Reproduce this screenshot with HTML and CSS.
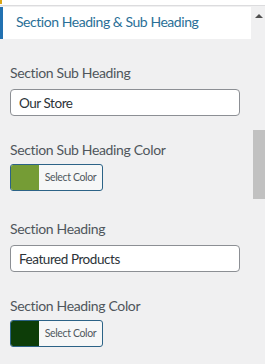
FILE: index.html
```html
<!DOCTYPE html>
<html lang="en">

<head>
    <meta charset="UTF-8">
    <meta name="viewport" content="width=device-width, initial-scale=1.0">
    <title>Customizer - Section Heading</title>
    <link rel="stylesheet" href="styles.css">
</head>

<body>
    <div class="topbar"><span class="topbar-accent"></span></div>
    <div class="frame">
        <div class="panel">
            <div class="section-head">Section Heading &amp; Sub Heading</div>
            <div class="controls">
                <div class="control">
                    <label class="control-label">Section Sub Heading</label>
                    <input type="text" class="text-input" value="Our Store">
                </div>
                <div class="control color-control">
                    <label class="control-label">Section Sub Heading Color</label>
                    <button class="color-button">
                        <span class="swatch" style="background: #759c35;"></span>
                        <span class="color-text">Select Color</span>
                    </button>
                </div>
                <div class="control">
                    <label class="control-label">Section Heading</label>
                    <input type="text" class="text-input" value="Featured Products">
                </div>
                <div class="control color-control">
                    <label class="control-label">Section Heading Color</label>
                    <button class="color-button">
                        <span class="swatch" style="background: #0d3d08;"></span>
                        <span class="color-text">Select Color</span>
                    </button>
                </div>
            </div>
        </div>
        <div class="scrollbar">
            <span class="arrow-up"></span>
            <span class="thumb"></span>
        </div>
    </div>
</body>

</html>
```

FILE: styles.css
```css
body {
    font-family: Lato, "Open Sans", sans-serif;
    background-color: #f0f0f1;
    margin: 0;
    padding: 0;
    width: 265px;
    height: 364px;
    overflow: hidden;
}

.topbar {
    height: 5px;
    background: white;
    border-bottom: 1px solid #dcdcde;
}

.topbar-accent {
    display: block;
    width: 2px;
    height: 4px;
    background: #dba617;
}

.frame {
    display: flex;
    padding-top: 1px;
}

.panel {
    width: 251px;
}

.section-head {
    background: white;
    border-left: 3px solid #2271b1;
    color: #2a6f97;
    font-size: 14px;
    letter-spacing: -0.45px;
    line-height: 20px;
    padding: 5px 0 7px 13px;
}

.controls {
    padding: 24px 11px 0 10px;
}

.control {
    margin-bottom: 24px;
}

.color-control {
    margin-bottom: 28px;
}

.control-label {
    display: block;
    color: #4f565c;
    font-size: 14px;
    letter-spacing: -0.35px;
    line-height: 20px;
    margin-bottom: 6px;
}

.color-control .control-label {
    margin-bottom: 4px;
}

.text-input {
    display: block;
    box-sizing: border-box;
    width: 230px;
    height: 27px;
    margin: 0;
    padding: 0 8px;
    border: 1px solid #8c8f94;
    border-radius: 4px;
    background: white;
    color: #2c3338;
    font-family: inherit;
    font-size: 13.5px;
    letter-spacing: -0.45px;
}

.color-button {
    display: flex;
    box-sizing: border-box;
    width: 93px;
    height: 27px;
    margin: 0;
    padding: 0;
    border: 1px solid #2c6387;
    border-radius: 3px;
    background: #f6f7f7;
    overflow: hidden;
    font-family: inherit;
}

.swatch {
    width: 28px;
    height: 100%;
}

.color-text {
    flex: 1;
    color: #50575e;
    font-size: 10.5px;
    letter-spacing: -0.35px;
    line-height: 25px;
    text-align: center;
}

.scrollbar {
    width: 14px;
    display: flex;
    flex-direction: column;
    align-items: flex-end;
}

.arrow-up {
    margin: 7px 2px 0 0;
    width: 0;
    height: 0;
    border-left: 4px solid transparent;
    border-right: 4px solid transparent;
    border-bottom: 4px solid #505050;
}

.thumb {
    margin-top: 112px;
    width: 12px;
    height: 69px;
    background: #c1c1c1;
}
```
